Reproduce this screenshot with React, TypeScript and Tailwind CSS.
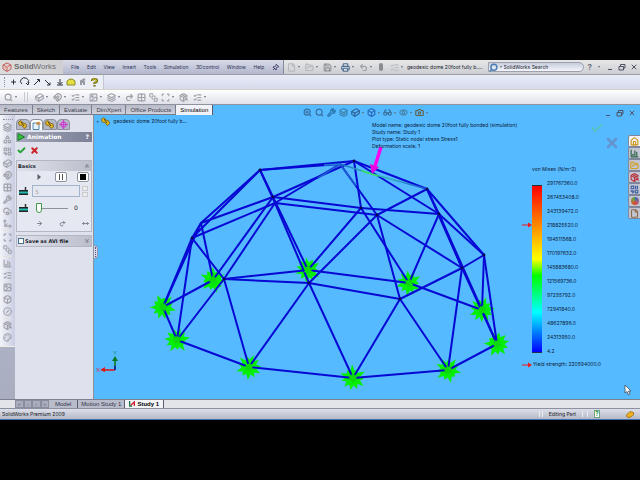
import type { ReactNode } from "react";
import {
  ArrowRight,
  Box,
  Camera,
  ChartColumn,
  Check,
  ChevronsDown,
  ChevronsUp,
  Circle,
  CircleSlash,
  CloudCog,
  Combine,
  Cuboid,
  Eye,
  File,
  FolderOpen,
  Glasses,
  Grid2x2,
  House,
  Image as ImageIcon,
  Layers,
  ListChecks,
  type LucideIcon,
  Magnet,
  Move3d,
  MoveHorizontal,
  Palette,
  PackageSearch,
  Pin,
  Printer,
  Redo2,
  Save,
  Scan,
  Search,
  Shapes,
  SquareStack,
  Undo2,
  Wrench,
  X,
  ZoomIn,
} from "lucide-react";

const menus = ["File", "Edit", "View", "Insert", "Tools", "Simulation", "3Dcontrol", "Window", "Help"];

const commandTabs = ["Features", "Sketch", "Evaluate", "DimXpert", "Office Products", "Simulation"];

const legend = [
  "291767360.0",
  "267453408.0",
  "243139472.0",
  "218825520.0",
  "194511568.0",
  "170197632.0",
  "145883680.0",
  "121569736.0",
  "97255792.0",
  "72941840.0",
  "48627896.0",
  "24313950.0",
  "4.2",
];

const sideGroups: LucideIcon[][] = [
  [Layers, Shapes, Combine, Cuboid, Magnet, Grid2x2, Wrench, CloudCog, Move3d],
  [Scan, SquareStack],
  [ChartColumn, ListChecks, ImageIcon, Box, CircleSlash],
  [PackageSearch, Palette],
];

type Point = [number, number];

const nodes: Record<string, Point> = {
  A: [260, 170],
  B: [273, 197],
  B2: [275, 203],
  C: [201, 223],
  D: [192, 238],
  T: [354, 161],
  U: [340, 164],
  V: [427, 189],
  W: [439, 214],
  X: [361, 208],
  Y: [377, 215],
  Z: [484, 255],
  Q: [462, 268],
  P: [400, 299],
  O: [309, 283],
  N: [224, 279],
  G1: [308, 270],
  G2: [213, 280],
  G3: [163, 307],
  G4: [177, 340],
  G5: [249, 367],
  G6: [353, 378],
  G7: [448, 370],
  G8: [497, 344],
  G9: [482, 310],
  G10: [409, 283],
};

const struts =
  "A-T A-U A-C A-D A-B A-B2 B-G1 B2-O C-B D-B2 B-T B2-U B-X B2-Y X-W B-G2 B2-N C-D C-G2 C-G3 D-G3 D-G4 D-N " +
  "N-G1 N-O N-G4 N-G5 G2-G3 G3-G4 G4-G5 G5-G6 G6-G7 G7-G8 O-G5 O-G6 O-P O-Y G1-X G1-G10 " +
  "T-X T-V T-W U-Y Y-V Y-Q Y-P X-G10 W-G10 V-W V-Q V-Z W-Z W-Q W-G9 Z-Q Z-G9 Z-G8 Q-P Q-G8 Q-G7 P-G6 P-G7 G10-G9 G8-G9";

const fixtures = ["G1", "G2", "G3", "G4", "G5", "G6", "G7", "G8", "G9", "G10"];

// jagged outline of a fixture symbol, the seed varies the spikes
function burst([cx, cy]: Point, seed: number, scale = 1) {
  const points: string[] = [];
  for (let i = 0; i < 22; i++) {
    const angle = (i / 22) * Math.PI * 2 + seed;
    const wobble = Math.abs(Math.sin(i * 2.3 + seed * 5)) * 4;
    const r = (i % 2 ? 7.5 : 9.5 + wobble) * scale;
    points.push(`${(cx + Math.cos(angle) * r).toFixed(1)},${(cy + Math.sin(angle) * r).toFixed(1)}`);
  }
  return points.join(" ");
}

function Dome() {
  return (
    <svg viewBox="94 115 546 284" preserveAspectRatio="xMinYMin meet" className="block w-full" aria-hidden="true">
      <defs>
        <linearGradient id="stress" x1="0" x2="1" y1="0" y2="0">
          <stop offset="0" stopColor="#1e62d8" />
          <stop offset="0.35" stopColor="#2fc0a0" />
          <stop offset="0.6" stopColor="#30a8c0" />
          <stop offset="1" stopColor="#1c50d8" />
        </linearGradient>
      </defs>
      {fixtures.map((id, i) => (
        <polygon key={id} points={burst(nodes[id], i * 0.7)} fill="#06ee06" />
      ))}
      <g stroke="#0808d4" strokeWidth="2" strokeLinecap="round">
        {struts.split(" ").map((strut) => {
          const [from, to] = strut.split("-");
          const [x1, y1] = nodes[from];
          const [x2, y2] = nodes[to];
          return <line key={strut} x1={x1} y1={y1} x2={x2} y2={y2} />;
        })}
      </g>
      {fixtures.map((id, i) => (
        <polygon key={id} points={burst(nodes[id], i * 0.7 + 0.4, 0.4)} fill="#0cd80c" />
      ))}
      <g fill="none" strokeWidth="1.5">
        <path d="M340 164 L372 174 L427 189" stroke="url(#stress)" />
        <path d="M318 178 L340 164 L356 186" stroke="#1b5fd2" />
        <path d="M362 171 L378 176" stroke="#35e060" />
        <path d="M324 165 L340 164" stroke="#2080d0" />
      </g>
      <g fill="#060b50">
        {["A", "B", "D", "T", "V", "W", "X", "Y", "Z", "Q", "P", "O", "N"].map((id) => (
          <circle key={id} cx={nodes[id][0]} cy={nodes[id][1]} r="1.4" />
        ))}
      </g>
      <path d="M381 147 L375 166" stroke="#ff00f0" strokeWidth="3.4" />
      <path d="M370 164 L379 167 L372 174 Z" fill="#e800e0" />
      <g strokeWidth="1.6">
        <path d="M115 370 V360" stroke="#0a7a20" />
        <path d="M112 361 L115 356 L118 361 Z" fill="#0a7a20" />
        <path d="M115 370 H105" stroke="#e01818" />
        <path d="M105 367 L100 370 L105 372 Z" fill="#e01818" />
        <path d="M115 366 V370" stroke="#1020b0" />
      </g>
      <g fontFamily="Liberation Sans, sans-serif" fontSize="6">
        <text x="113" y="355" fill="#1c8a50">Y</text>
        <text x="96" y="372" fill="#d03050">X</text>
      </g>
    </svg>
  );
}

function Caret() {
  return <span className="border-x border-t-2 border-x-transparent border-t-[#666b78]" />;
}

function ToolButton({ icon: Icon, label, className = "text-[#9fa1a9]", size = 9, caret = false }: {
  icon: LucideIcon;
  label: string;
  className?: string;
  size?: number;
  caret?: boolean;
}) {
  return (
    <button type="button" aria-label={label} className={`flex shrink-0 items-center gap-0.5 ${className}`}>
      <Icon size={size} strokeWidth={3} />
      {caret && <Caret />}
    </button>
  );
}

function WindowButtons() {
  return (
    <div className="flex items-center gap-1 text-[#4d5262]">
      <button type="button" aria-label="Minimize" className="flex h-2 w-2 items-end justify-center pb-px">
        <span className="h-px w-1 bg-current" />
      </button>
      <button type="button" aria-label="Restore">
        <svg viewBox="0 0 8 8" className="size-2" fill="none" stroke="currentColor">
          <path d="M2.500 3 V1.500 H7 V5 H5.500 M1 3.500 H5.500 V7 H1 Z" />
        </svg>
      </button>
      <button type="button" aria-label="Close">
        <X size={8} strokeWidth={3} />
      </button>
    </div>
  );
}

function RedArrow() {
  return (
    <svg viewBox="0 0 10 6" className="h-1.5 w-2.5 shrink-0" aria-hidden="true">
      <path d="M0 3 H7" stroke="#f01818" />
      <path d="M6 0.500 L10 3 L6 5.500 Z" fill="#f01818" />
    </svg>
  );
}

function TitleBar() {
  return (
    <header className="flex h-[15px] items-center border-b border-[#9b9da6] bg-linear-to-b from-[#e7e7e9] to-[#cdced2] text-[5px] text-[#20232c]">
      <div className="flex h-full w-[63px] shrink-0 items-center gap-0.5 bg-linear-to-r from-[#dcdcdc] to-[#cfcfd2] pl-0.5 font-['Liberation_Sans',sans-serif] text-[8px] text-[#6c6c70]">
        <svg viewBox="0 0 10 10" className="size-2.5 shrink-0" fill="none" stroke="#c45a55">
          <path d="M1 3 L5 1 L9 3 V7 L5 9.500 L1 7 Z M1 3 L5 5 L9 3 M5 5 V9" />
          <path d="M3 6 L7 4" stroke="#e09a90" strokeWidth="2" />
        </svg>
        <span>
          <b>Solid</b>Works
        </span>
      </div>
      <nav className="flex h-full w-[221px] shrink-0 items-center justify-between border-r border-[#85889c] bg-linear-to-b from-[#d9dbea] to-[#b3b7cd] pr-1 pl-2 text-[#2b3156]">
        {menus.map((menu) => (
          <button type="button" key={menu}>
            {menu}
          </button>
        ))}
        <Pin size={7} strokeWidth={3} className="rotate-45" />
      </nav>
      <div className="flex shrink-0 items-center gap-[5px] pl-[3px]">
        <ToolButton icon={File} label="New" className="text-[#b6b8bc]" caret />
        <ToolButton icon={FolderOpen} label="Open" className="text-[#b6b8bc]" caret />
        <ToolButton icon={Save} label="Save" className="text-[#929499]" caret />
        <ToolButton icon={Printer} label="Print" className="text-[#4d6f92]" caret />
        <ToolButton icon={Undo2} label="Undo" className="text-[#a0a2a8]" caret />
        <button type="button" aria-label="Rebuild" className="mx-0.5 h-2 w-1 rounded-sm bg-[#8a8c91]" />
        <ToolButton icon={ListChecks} label="Options" className="text-[#bcbec2]" caret />
      </div>
      <span className="ml-1 flex-1 whitespace-nowrap">geodesic dome 20foot fully b....</span>
      <label className="flex h-2.5 w-24 items-center gap-0.5 rounded-r-md border border-[#9ea1ad] bg-linear-to-b from-[#c8cddd] to-[#f4f5fb]">
        <Search size={9} strokeWidth={4} className="shrink-0 -scale-x-100 text-[#4a7fb5]" />
        <Caret />
        <input aria-label="Search" defaultValue="SolidWorks Search" className="w-full min-w-0 bg-transparent text-[5px]" />
      </label>
      <div className="flex items-center gap-1.5 pr-0.5 pl-1">
        <button type="button" className="text-[8px] font-bold text-[#6d7079]">?</button>
        <Caret />
        <WindowButtons />
      </div>
    </header>
  );
}

function SketchBar() {
  return (
    <div className="h-[15px] border-b border-[#d5d3c8] bg-linear-to-b from-[#e9ebf6] to-[#d5daec]">
      <div className="flex h-full w-26 items-center gap-1 border-r border-[#c3c6d2] bg-[#eceef5] pl-1">
        <span className="h-2.5 border-l border-dotted border-[#8c90a0]" />
        <svg viewBox="0 0 92 10" className="h-2.5 w-[92px]" fill="none" stroke="#2c2f3a">
          <path d="M2 5 H7 M4.500 2.500 V7.500" />
          <path d="M13 7 A4 3.500 0 1 1 19 6 M17 6 L19 8 L20 5" />
          <path d="M25 8 L30 3 M28 2.500 H30.500 V5" />
          <path d="M36 3 L41 8 M38 8 H41 V5.500" />
          <path d="M51 2 V7 M48.500 5 L51 7.500 L53.500 5 M48 8 H54" />
          <path d="M58 8 V4 Q62 0 66 4 V8 Z" fill="#e5df40" stroke="#8b8a30" />
          <path d="M72 8 V4 L76 2 M72 5 H75 V8" stroke="#9a9ca4" strokeWidth="2" />
          <path d="M83 4 Q83 2 85.500 2 T88 4 Q88 5 85.500 6 V7 M85.500 8 V9.500" stroke="#6a6510" strokeWidth="2.200" />
          <path d="M83.500 4 Q83.500 2 85.500 2 T87.500 4 Q87 5 85.500 6" stroke="#d8cc20" />
        </svg>
      </div>
    </div>
  );
}

function SimulationBar() {
  return (
    <div className="flex h-[15px] items-center gap-[5px] border-b border-[#8f929e] bg-linear-to-b from-white to-[#dfe1ea] pl-1">
      <ToolButton icon={Search} label="Study advisor" caret />
      <span className="mx-0.5 h-2.5 w-1 border-x border-[#c6c8cf]" />
      <ToolButton icon={Cuboid} label="Apply material" caret />
      <ToolButton icon={Magnet} label="Fixtures" caret />
      <ToolButton icon={ListChecks} label="Loads" caret />
      <ToolButton icon={ImageIcon} label="Connections" caret />
      <ToolButton icon={Layers} label="Run" caret />
      <div className="flex gap-[3px]">
        <ToolButton icon={Redo2} label="Results" />
        <ToolButton icon={Grid2x2} label="Deformed result" />
        <ToolButton icon={SquareStack} label="Compare results" />
        <ToolButton icon={Scan} label="Plot tools" caret />
      </div>
      <ToolButton icon={PackageSearch} label="Report" />
      <ToolButton icon={ListChecks} label="Include image" caret />
    </div>
  );
}

function CommandTabs() {
  return (
    <div className="flex h-2.5 bg-[#55baff] font-['Liberation_Sans',sans-serif] text-[6px] text-[#3d404d]">
      {commandTabs.map((tab) => (
        <button
          type="button"
          key={tab}
          className={
            tab === "Simulation"
              ? "border-r border-[#55596b] bg-[#f1f2f7] px-1 text-black"
              : "border-r border-b border-[#7a7d8b] bg-linear-to-b from-[#b7bac8] to-[#d0d2dc] px-1"
          }
        >
          {tab}
        </button>
      ))}
    </div>
  );
}

function SideStrip() {
  return (
    <aside className="w-[15px] shrink-0 bg-linear-to-b from-[#c0c4d8] to-[#a9adc0]">
      <div className="flex flex-col items-center border-b border-[#f0eee4] bg-linear-to-r from-[#f3f4fa] to-[#c9cde2] pt-1 pb-0.5">
        <span className="mb-px w-2.5 border-t border-dotted border-[#8e92a2]" />
        {sideGroups.map((group, i) => (
          <div key={i} className="flex flex-col gap-[3px] border-b border-[#e4e2dc] py-0.5 last:border-b-0">
            {group.map((icon, k) => (
              <ToolButton key={k} icon={icon} label={`Tool ${i + 1}.${k + 1}`} />
            ))}
          </div>
        ))}
      </div>
    </aside>
  );
}

function Group({ title, children }: { title: ReactNode; children?: ReactNode }) {
  return (
    <section className="border border-[#b4b6c3] bg-[#e6e8f1]">
      <h2 className="flex h-2.5 items-center justify-between bg-linear-to-r from-[#dfe1ea] to-[#bcbfcb] px-px text-[5px] font-bold">
        {title}
        {children ? <ChevronsUp size={6} /> : <ChevronsDown size={6} />}
      </h2>
      {children}
    </section>
  );
}

function FilmIcon() {
  return (
    <svg viewBox="0 0 9 8" className="h-2 w-[9px] shrink-0" aria-hidden="true">
      <path d="M0 3 H9 V8 H0 Z" fill="#222" />
      <path d="M0 4.500 H9 V6.500 H0 Z" fill="#20b8b0" />
      <path d="M6.500 0 V3" stroke="#333" strokeWidth="1.500" />
    </svg>
  );
}

function PropertyPanel() {
  return (
    <div className="flex w-[79px] shrink-0 flex-col gap-0.5 border-r border-[#8e909a] bg-[#dfe2ec] px-px pt-1 font-['DejaVu_Sans',sans-serif] text-[#22242e]">
      <div className="flex h-[11px] w-[54px]">
        <button type="button" aria-label="Feature tree" className="flex flex-1 items-center justify-center rounded-t-sm border border-[#8d90a0] bg-[#b4b7c6]">
          <PartIcon />
        </button>
        <button type="button" aria-label="Properties" className="flex flex-1 items-center justify-center rounded-t-sm border border-b-0 border-[#8d90a0] bg-white">
          <svg viewBox="0 0 9 9" className="size-[9px]">
            <path d="M1 2 H7 V8.500 H1 Z" fill="#e6f3fc" stroke="#5284ac" />
            <path d="M4 2 L7 0.500 L9 3 L5 4 Z" fill="#cf8a3c" />
          </svg>
        </button>
        <button type="button" aria-label="Configurations" className="flex flex-1 items-center justify-center rounded-t-sm border border-[#8d90a0] bg-[#b4b7c6]">
          <PartIcon />
        </button>
        <button type="button" aria-label="DimXpert manager" className="flex flex-1 items-center justify-center rounded-t-sm border border-[#8d90a0] bg-[#b4b7c6]">
          <svg viewBox="0 0 9 9" className="size-[9px] shrink-0" fill="none" stroke="#cc40d0" strokeWidth="1.2">
            <circle cx="4.500" cy="4.500" r="2.500" />
            <path d="M4.500 0 V9 M0 4.500 H9" />
          </svg>
        </button>
      </div>
      <div className="flex h-2.5 items-center gap-0.5 bg-linear-to-r from-[#a4a8ba] to-[#7b8097] px-px text-[6px] font-bold text-white">
        <svg viewBox="0 0 8 8" className="size-2">
          <path d="M1 0.500 L7.500 4 L1 7.500 Z" fill="#35c040" stroke="#147a20" />
        </svg>
        <h1 className="flex-1">Animation</h1>
        <button type="button" className="pr-0.5">?</button>
      </div>
      <div className="flex h-3.5 items-center gap-1 pb-0.5 pl-px">
        <button type="button" aria-label="OK">
          <Check size={9} strokeWidth={5} className="text-[#25a235]" />
        </button>
        <button type="button" aria-label="Cancel">
          <X size={9} strokeWidth={5} className="text-[#cc2028]" />
        </button>
      </div>
      <Group title="Basics">
        <div className="flex flex-col gap-[3px] px-0.5 pt-px pb-1">
          <div className="flex h-2.5 items-center justify-end gap-2.5">
            <button type="button" aria-label="Play" className="mr-1">
              <svg viewBox="0 0 4 6" className="h-1.5 w-1">
                <path d="M0.500 0 L4 3 L0.500 6 Z" fill="#5a5d66" />
              </svg>
            </button>
            <button type="button" aria-label="Pause" className="flex h-2.5 w-3 items-center justify-center gap-0.5 rounded-xs border border-[#8f919c] bg-white">
              <span className="h-1.5 w-px bg-[#555]" />
              <span className="h-1.5 w-px bg-[#555]" />
            </button>
            <button type="button" aria-label="Stop" className="flex h-2.5 w-3 items-center justify-center rounded-xs border border-[#8f919c] bg-white">
              <span className="size-1.5 bg-black" />
            </button>
          </div>
          <div className="flex h-3 items-center">
            <FilmIcon />
            <input aria-label="Frames" defaultValue="5" className="ml-1 h-3 w-12 border border-[#9fb3cc] bg-[#e6e8f1] pl-0.5 text-[6px] text-[#aaa]" />
            <span className="ml-0.5 flex flex-col gap-px">
              <button type="button" aria-label="More frames" className="h-[5px] w-1.5 border border-[#c9cad0] bg-[#ecece8]" />
              <button type="button" aria-label="Fewer frames" className="h-[5px] w-1.5 border border-[#c9cad0] bg-[#ecece8]" />
            </span>
          </div>
          <div className="flex h-4 items-center">
            <FilmIcon />
            <input
              type="range"
              aria-label="Speed"
              defaultValue={0}
              className="ml-2 h-2.5 w-8 appearance-none bg-[linear-gradient(#8f9098,#8f9098)] bg-[length:100%_1px] bg-center bg-no-repeat [&::-webkit-slider-thumb]:h-2.5 [&::-webkit-slider-thumb]:w-1.5 [&::-webkit-slider-thumb]:appearance-none [&::-webkit-slider-thumb]:rounded-b-sm [&::-webkit-slider-thumb]:border [&::-webkit-slider-thumb]:border-[#3f9a4a] [&::-webkit-slider-thumb]:bg-white"
            />
            <output className="ml-1.5 text-[6px]">0</output>
          </div>
          <div className="flex h-2 items-center justify-end gap-4">
            <ToolButton icon={ArrowRight} label="Play once" size={7} className="text-[#777a85]" />
            <ToolButton icon={Redo2} label="Loop" size={7} className="text-[#777a85]" />
            <ToolButton icon={MoveHorizontal} label="Reciprocate" size={7} className="text-[#777a85]" />
          </div>
        </div>
      </Group>
      <div className="mt-px">
        <Group
          title={
            <label className="flex items-center gap-px whitespace-nowrap">
              <input type="checkbox" className="size-1.5 appearance-none border border-[#4a7090] bg-white" />
              Save as AVI file
            </label>
          }
        />
      </div>
    </div>
  );
}

function PartIcon() {
  return (
    <svg viewBox="0 0 9 9" className="size-[9px] shrink-0" aria-hidden="true">
      <path d="M0.500 2 L3 0.500 L5 3 L8 4 L8.500 7 L6 8.500 L4 5.500 L1 5 Z" fill="#e6bb22" stroke="#6d5410" strokeWidth="0.700" />
      <path d="M3 2 L6 6" stroke="#4e3c08" />
    </svg>
  );
}

function HeadsUpBar() {
  return (
    <div className="absolute top-[-7px] left-[209px] flex items-center gap-[3px]">
      <ToolButton icon={ZoomIn} label="Zoom to fit" className="text-[#376f9f]" />
      <ToolButton icon={Search} label="Zoom to area" className="text-[#376f9f]" />
      <ToolButton icon={Wrench} label="Previous view" className="text-[#2672a8]" />
      <ToolButton icon={Layers} label="Section view" className="text-[#3a7fa8]" />
      <ToolButton icon={Cuboid} label="View orientation" className="text-[#2c5f94]" caret />
      <ToolButton icon={Box} label="Display style" className="text-[#2868b8]" caret />
      <ToolButton icon={Glasses} label="Hide or show items" className="text-[#3a6f98]" caret />
      <ToolButton icon={Eye} label="Appearance" className="text-[#4685a8]" caret />
      <ToolButton icon={Camera} label="View settings" className="text-[#665f45]" caret />
    </div>
  );
}

const taskPane: { icon: LucideIcon; label: string; tone: string }[] = [
  { icon: House, label: "Resources", tone: "text-[#c89418]" },
  { icon: ChartColumn, label: "Design library", tone: "text-[#286048]" },
  { icon: FolderOpen, label: "File explorer", tone: "text-[#d0a020]" },
  { icon: PackageSearch, label: "Search", tone: "text-[#b83038]" },
  { icon: Combine, label: "View palette", tone: "text-[#3c5ea0]" },
  { icon: Circle, label: "Appearances", tone: "" },
  { icon: File, label: "Custom properties", tone: "text-[#8a6a48]" },
];

function TaskPane() {
  return (
    <div className="absolute top-5 right-0 flex w-3 flex-col">
      {taskPane.map(({ icon: Icon, label, tone }, i) => (
        <button
          type="button"
          key={label}
          aria-label={label}
          className={`flex h-3 items-center justify-center rounded-l-xs border border-r-0 border-[#82869a] ${i ? "bg-[#c3c6d2]" : "bg-[#f3f3f5]"} ${tone}`}
        >
          {label === "Appearances" ? (
            <span className="size-2 rounded-full bg-conic from-[#2867c8] via-[#e03c30] to-[#36a840]" />
          ) : (
            <Icon size={9} strokeWidth={3} />
          )}
        </button>
      ))}
    </div>
  );
}

function Legend() {
  return (
    <div className="absolute top-[51px] right-[61px] w-[57px]">
      <p className="ml-2.5 whitespace-nowrap">von Mises (N/m^2)</p>
      <div className="mt-[3px] flex">
        <div className="flex w-2.5 justify-end pt-[46px]">
          <RedArrow />
        </div>
        <div className="mt-[9px] mb-[5px] w-2.5 border-y border-[#20304a] bg-[linear-gradient(to_bottom,#ff0000,#ffff00_44%,#00ff00_54%,#00ffff_76%,#0000ff)]" />
        <ul className="ml-[5px]">
          {legend.map((value) => (
            <li key={value} className="flex h-3.5 items-center">
              {value}
            </li>
          ))}
        </ul>
      </div>
      <p className="mt-[3px] flex items-center gap-px whitespace-nowrap">
        <RedArrow />
        Yield strength: 220594000.0
      </p>
    </div>
  );
}

function Viewport() {
  return (
    <main className="relative min-w-0 flex-1 bg-[#55baff] text-[5px] leading-[7px] text-[#0c2038]">
      <Dome />
      <HeadsUpBar />
      <div className="absolute top-0.5 left-0.5 flex items-center gap-0.5 whitespace-nowrap">
        <span>+</span>
        <PartIcon />
        <span className="pl-px">geodesic dome 20foot fully b...</span>
      </div>
      <div className="absolute top-[7px] left-[278px] whitespace-nowrap">
        <p>Model name: geodesic dome 20foot fully bonded (simulation)</p>
        <p>Study name: Study 1</p>
        <p>Plot type: Static nodal stress Stress1</p>
        <p>Deformation scale: 1</p>
      </div>
      <div className="absolute top-[-6px] right-1">
        <WindowButtons />
      </div>
      <div className="absolute top-1.5 right-5 flex flex-col items-end">
        <Check size={14} strokeWidth={3} className="mr-4 text-[#58c4b8]" />
        <X size={16} strokeWidth={4} className="text-[#6393d0]" />
      </div>
      <TaskPane />
      <Legend />
      <div className="absolute top-[130px] left-0 flex h-3.5 w-1 items-center rounded-r-sm border border-l-0 border-[#9194ac] bg-[#d9dcf0]">
        <span className="ml-px h-2.5 border-l border-dotted border-[#50547c]" />
      </div>
      <svg viewBox="0 0 8 12" className="absolute right-2 bottom-[3px] h-3 w-2">
        <path d="M1 1 V9 L3 7.500 L4.500 11 L6 10 L4.500 7 H7 Z" fill="#fff" stroke="#454b58" strokeWidth="0.800" />
      </svg>
    </main>
  );
}

function StudyTabs() {
  return (
    <div className="flex h-[9px] border-t border-[#7d8090] bg-[#e3e4ea] pl-[15px] font-['Liberation_Sans',sans-serif] text-[6px] leading-[8px] text-[#33354a]">
      <div className="flex w-[34px] bg-[#a9acbc]">
        {["«", "‹", "›", "»"].map((glyph) => (
          <button type="button" key={glyph} className="flex-1 border border-[#8a8d9e] text-[6px] leading-[6px] text-[#74778a]">
            {glyph}
          </button>
        ))}
      </div>
      <button type="button" className="border-r border-[#5c5f70] bg-[#b9bccb] px-1.5">Model</button>
      <button type="button" className="border-r border-[#5c5f70] bg-[#b9bccb] px-[3px]">Motion Study 1</button>
      <button type="button" className="flex items-center gap-0.5 border-r border-[#5c5f70] bg-[#f3f4f8] px-1 font-bold text-black">
        <svg viewBox="0 0 6 6" className="size-1.5">
          <path d="M0.500 0 V5 H3" stroke="#207040" fill="none" strokeWidth="1.500" />
          <path d="M2 4 L5.500 1 V5" stroke="#d02030" fill="none" strokeWidth="1.500" />
        </svg>
        Study 1
      </button>
    </div>
  );
}

function StatusBar() {
  return (
    <footer className="flex h-3 items-center border-t border-b border-t-[#8d90a0] border-b-[#3f6faf] bg-linear-to-b from-[#dddfe9] to-[#b5b8c7] px-0.5 text-[5px] text-[#191b25]">
      <span className="flex-1">SolidWorks Premium 2009</span>
      <div className="flex items-center gap-1.5 pr-1">
        <span className="h-1.5 w-1 border-x border-[#eeeef0]" />
        <span>Editing Part</span>
        <span className="h-1.5 w-1.5 border-x border-[#eeeef0]" />
        <button type="button" className="flex h-2 w-1.5 items-center justify-center border border-[#70a080] bg-white text-[6px] leading-none font-bold text-[#159030]">
          ?
        </button>
        <svg viewBox="0 0 8 7" className="ml-5 h-[7px] w-2">
          <path d="M0.500 4 L4 0.500 L7.500 1.500 V4 L4 6.500 L1 6 Z" fill="#eeb020" stroke="#9b6b10" strokeWidth="0.800" />
        </svg>
      </div>
    </footer>
  );
}

export default function App() {
  return (
    <div className="flex min-h-screen flex-col bg-black py-15 font-['Inter',sans-serif] leading-none">
      <TitleBar />
      <SketchBar />
      <SimulationBar />
      <CommandTabs />
      <div className="flex flex-1">
        <SideStrip />
        <PropertyPanel />
        <Viewport />
      </div>
      <StudyTabs />
      <StatusBar />
    </div>
  );
}
